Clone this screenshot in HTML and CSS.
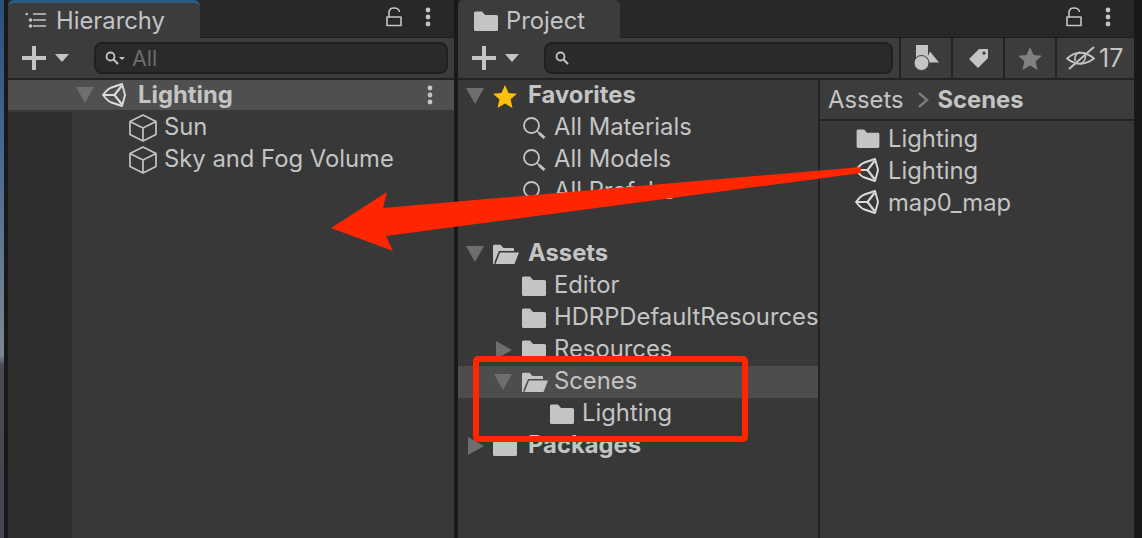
FILE: index.html
```html
<!DOCTYPE html>
<html lang="en">
  <head>
    <meta charset="UTF-8" />
    <meta name="viewport" content="width=device-width, initial-scale=1.0" />
    <title>Hierarchy and Project</title>
    <link rel="stylesheet" href="styles.css">
  </head>
  <body>
    <svg width="0" height="0" class="defs">
      <defs>
        <symbol id="i-unity" viewBox="0 0 24 24">
          <path d="M1 12 Q6 5.500 9.500 4.500 L20 1 Q21.500 6 23 12 Q21.500 18 20 23 L9.500 19.500 Q6 18.500 1 12 Z" fill="none" stroke="currentColor" stroke-width="1.900" stroke-linejoin="round"/>
          <path d="M1 12 H12.500 L19.500 3 M12.500 12 L19.500 21" fill="none" stroke="currentColor" stroke-width="2.100" stroke-linejoin="round"/>
        </symbol>
        <symbol id="i-cube" viewBox="0 0 28 28">
          <path d="M14 1 L27 7.500 V20.500 L14 27 L1 20.500 V7.500 Z M1 7.500 L14 14 L27 7.500 M14 14 V27" fill="none" stroke="currentColor" stroke-width="1.700" stroke-linejoin="round"/>
        </symbol>
        <symbol id="i-folder" viewBox="0 0 24 20">
          <path d="M0 2 Q0 .5 1.500 .5 H8 L11 4 H22.500 Q24 4 24 5.500 V18.500 Q24 20 22.500 20 H1.500 Q0 20 0 18.500 Z" fill="currentColor"/>
        </symbol>
        <symbol id="i-open" viewBox="0 0 26 20">
          <path d="M0 2 Q0 .7 1.300 .7 H7.500 L10.500 4 H20 Q21 4 21 5 V7 H6 L1.500 18 V20 H0 Z" fill="currentColor"/>
          <path d="M7 8.500 H26 L21.500 20 H2.500 Z" fill="currentColor"/>
        </symbol>
        <symbol id="i-glass" viewBox="0 0 24 24">
          <circle cx="9.500" cy="9.500" r="7.500" fill="none" stroke="currentColor" stroke-width="1.800"/>
          <path d="M15 15 L17 17" stroke="currentColor" stroke-width="1.500"/>
          <path d="M17 17 L22.500 22" stroke="currentColor" stroke-width="3"/>
        </symbol>
        <symbol id="i-glass-small" viewBox="0 0 14 14">
          <circle cx="5.500" cy="5.500" r="4" fill="none" stroke="currentColor" stroke-width="1.800"/>
          <path d="M8.500 8.500 L13 13" stroke="currentColor" stroke-width="2"/>
        </symbol>
        <symbol id="i-lock" viewBox="0 0 16 20">
          <path d="M1 10 H15 V18.500 H1 Z M3 10 V5.500 Q3 1 8 1 Q13 1 13.500 5" fill="none" stroke="currentColor" stroke-width="1.600" stroke-linejoin="round"/>
        </symbol>
        <symbol id="i-dots" viewBox="0 0 6 20">
          <circle cx="3" cy="3" r="2.400" fill="currentColor"/>
          <circle cx="3" cy="10" r="2.400" fill="currentColor"/>
          <circle cx="3" cy="17" r="2.400" fill="currentColor"/>
        </symbol>
        <symbol id="i-plus" viewBox="0 0 24 24">
          <path d="M12 0 V24 M0 12 H24" stroke="currentColor" stroke-width="4"/>
        </symbol>
      </defs>
    </svg>

    <div class="scene-strip"></div>

    <section class="panel hierarchy">
      <div class="tabbar">
        <div class="tab tab-active">
          <svg class="tab-icon" width="22" height="16" viewBox="0 0 22 16">
            <path d="M8 1 H21 M8 7 H21 M8 13 H21" stroke="currentColor" stroke-width="1.600" fill="none"/>
            <circle cx="1.700" cy="1" r="1.300" fill="currentColor"/>
            <circle cx="5.500" cy="7" r="1.800" fill="currentColor"/>
            <circle cx="5.500" cy="13" r="1.800" fill="currentColor"/>
          </svg>
          <span>Hierarchy</span>
        </div>
        <div class="tab-tools">
          <svg class="lock" width="16" height="20"><use href="#i-lock"/></svg>
          <svg class="dots" width="6" height="20"><use href="#i-dots"/></svg>
        </div>
      </div>
      <div class="toolbar">
        <div class="add">
          <svg width="24" height="24"><use href="#i-plus"/></svg>
          <span class="caret-down"></span>
        </div>
        <div class="search">
          <svg class="search-glass" width="14" height="14"><use href="#i-glass-small"/></svg>
          <span class="search-mini"></span>
          <span class="search-hint">All</span>
        </div>
      </div>
      <div class="hier-body">
        <div class="hier-gutter"></div>
        <div class="hier-list">
          <div class="row row-scene">
            <span class="tri-down"></span>
            <svg class="unity" width="24" height="24"><use href="#i-unity"/></svg>
            <b>Lighting</b>
            <svg class="dots row-dots" width="6" height="20"><use href="#i-dots"/></svg>
          </div>
          <div class="row row-child">
            <svg class="cube" width="28" height="28"><use href="#i-cube"/></svg>
            <span>Sun</span>
          </div>
          <div class="row row-child">
            <svg class="cube" width="28" height="28"><use href="#i-cube"/></svg>
            <span>Sky and Fog Volume</span>
          </div>
        </div>
      </div>
    </section>

    <section class="panel project">
      <div class="tabbar">
        <div class="tab tab-project">
          <svg class="tab-folder" width="24" height="20"><use href="#i-folder"/></svg>
          <span>Project</span>
        </div>
        <div class="tab-tools">
          <svg class="lock" width="16" height="20"><use href="#i-lock"/></svg>
          <svg class="dots" width="6" height="20"><use href="#i-dots"/></svg>
        </div>
      </div>
      <div class="toolbar toolbar-project">
        <div class="add">
          <svg width="24" height="24"><use href="#i-plus"/></svg>
          <span class="caret-down"></span>
        </div>
        <div class="search search-project">
          <svg class="search-glass" width="14" height="14"><use href="#i-glass-small"/></svg>
        </div>
        <div class="filter">
          <svg width="25" height="26" viewBox="0 0 25 26">
            <rect x="2" y="0" width="12" height="12.500" fill="currentColor"/>
            <path d="M16 6.500 L25 17.500 H11 Z" fill="currentColor"/>
            <circle cx="7.500" cy="18" r="7.500" fill="currentColor" stroke="#3c3c3c" stroke-width="1"/>
          </svg>
        </div>
        <div class="filter">
          <svg width="21" height="21" viewBox="0 0 21 21">
            <path fill-rule="evenodd" d="M11 1 H20 V10 L10 20 L1 11 Z M16 3.500 a1.600 1.600 0 1 0 .01 0 Z" fill="currentColor"/>
          </svg>
        </div>
        <div class="filter">
          <svg class="filter-star" width="24" height="23" viewBox="0 0 24 23">
            <path d="M12 0 L15.500 8 L24 8.800 L17.600 14.300 L19.500 23 L12 18.400 L4.500 23 L6.400 14.300 L0 8.800 L8.500 8 Z" fill="currentColor"/>
          </svg>
        </div>
        <div class="filter filter-hidden">
          <svg width="29" height="24" viewBox="0 0 29 24">
            <path d="M1 12.500 Q14 1 28 12.500 Q14 23 1 12.500 Z" fill="none" stroke="currentColor" stroke-width="1.800"/>
            <path d="M14 6 Q8 8 9 15 M19 8 Q21 15 14 18" fill="none" stroke="currentColor" stroke-width="1.600"/>
            <path d="M3 23 L28 1" stroke="currentColor" stroke-width="2"/>
          </svg>
          <span>17</span>
        </div>
      </div>
      <div class="project-body">
        <div class="tree">
          <div class="row tree-top">
            <span class="tri-down"></span>
            <svg class="gold" width="24" height="23" viewBox="0 0 24 23">
              <path d="M12 0 L15.500 8 L24 8.800 L17.600 14.300 L19.500 23 L12 18.400 L4.500 23 L6.400 14.300 L0 8.800 L8.500 8 Z" fill="currentColor"/>
            </svg>
            <b>Favorites</b>
          </div>
          <div class="row tree-l1"><svg width="24" height="24"><use href="#i-glass"/></svg><span>All Materials</span></div>
          <div class="row tree-l1"><svg width="24" height="24"><use href="#i-glass"/></svg><span>All Models</span></div>
          <div class="row tree-l1"><svg width="24" height="24"><use href="#i-glass"/></svg><span>All Prefabs</span></div>
          <div class="row tree-gap"></div>
          <div class="row tree-top">
            <span class="tri-down"></span>
            <svg class="open" width="26" height="20"><use href="#i-open"/></svg>
            <b>Assets</b>
          </div>
          <div class="row tree-l1"><svg width="24" height="20"><use href="#i-folder"/></svg><span>Editor</span></div>
          <div class="row tree-l1"><svg width="24" height="20"><use href="#i-folder"/></svg><span>HDRPDefaultResources</span></div>
          <div class="row tree-l1 tree-arrowed">
            <span class="tri-right"></span>
            <svg width="24" height="20"><use href="#i-folder"/></svg><span>Resources</span>
          </div>
          <div class="row tree-l1 tree-arrowed row-selected">
            <span class="tri-down"></span>
            <svg class="open" width="26" height="20"><use href="#i-open"/></svg><span>Scenes</span>
          </div>
          <div class="row tree-l2"><svg width="24" height="20"><use href="#i-folder"/></svg><span>Lighting</span></div>
          <div class="row tree-top">
            <span class="tri-right"></span>
            <svg width="24" height="20"><use href="#i-folder"/></svg>
            <b>Packages</b>
          </div>
        </div>
        <div class="browser">
          <div class="crumbs">
            <span>Assets</span>
            <svg width="12" height="16" viewBox="0 0 12 16"><path d="M2 1 L10 8 L2 15" fill="none" stroke="currentColor" stroke-width="2.500"/></svg>
            <b>Scenes</b>
          </div>
          <div class="files">
            <div class="row file"><svg width="24" height="19"><use href="#i-folder"/></svg><span>Lighting</span></div>
            <div class="row file"><svg class="unity" width="24" height="24"><use href="#i-unity"/></svg><span>Lighting</span></div>
            <div class="row file"><svg class="unity" width="24" height="24"><use href="#i-unity"/></svg><span>map0_map</span></div>
          </div>
        </div>
      </div>
    </section>

    <!-- Anotacoes em vermelho por cima do print -->
    <svg class="marks" width="1142" height="538" viewBox="0 0 1142 538">
      <path d="M861 167 L861 173 L386 236 L393 251 L331 228 L387 192 L383 208 Z" fill="#ff2600"/>
      <rect x="476" y="359" width="269" height="80" rx="2" fill="none" stroke="#ff2600" stroke-width="6"/>
    </svg>
  </body>
</html>
```

FILE: styles.css
```css
* {
  box-sizing: border-box;
}

html,
body {
  height: 100%;
}

body {
  margin: 0;
  display: flex;
  overflow: hidden;
  background: #191919;
  color: #c4c4c4;
  font-family: Inter, "Noto Sans", sans-serif;
  font-size: 23.8px;
  padding-right: 8px;
  gap: 4px;
}

svg {
  flex: none;
}

.defs {
  position: absolute;
}

.scene-strip {
  width: 4px;
  flex: none;
  background: linear-gradient(#2a4f78 0, #4a6a90 30%, #7d8791 66%, #4a4a52 68%, #45454f 100%);
}

.panel {
  display: flex;
  flex-direction: column;
  background: #383838;
  min-width: 0;
}

.hierarchy {
  width: 446px;
  flex: none;
}

.project {
  flex: 1;
}

/* Abas */
.tabbar {
  display: flex;
  justify-content: space-between;
  height: 38px;
  flex: none;
  background: #282828;
  border-bottom: 1px solid #1d1d1d;
}

.tab {
  display: flex;
  align-items: center;
  height: 38px;
  gap: 10px;
  background: #3c3c3c;
  border-radius: 6px 6px 0 0;
  color: #c4c4c4;
}

.tab-active {
  width: 192px;
  padding-left: 17px;
  gap: 9px;
  border-top: 3px solid #2c5d87;
}

.tab-project {
  width: 162px;
  padding: 3px 0 0 16px;
  gap: 8px;
}

.tab-tools {
  display: flex;
  align-items: center;
  gap: 23px;
  padding: 0 23px 3px 0;
}

/* Barra de ferramentas */
.toolbar {
  display: flex;
  align-items: center;
  height: 42px;
  flex: none;
  background: #3c3c3c;
  border-bottom: 2px solid #232323;
}

.add {
  display: flex;
  align-items: center;
  gap: 9px;
  width: 86px;
  padding-left: 14px;
  flex: none;
  color: #c4c4c4;
}

.caret-down {
  width: 0;
  height: 0;
  border-left: 7px solid transparent;
  border-right: 7px solid transparent;
  border-top: 8px solid #c4c4c4;
}

.search {
  display: flex;
  align-items: center;
  flex: 1;
  height: 32px;
  margin-right: 6px;
  padding-left: 9px;
  background: #2a2a2a;
  border: 2px solid #202020;
  border-radius: 8px;
  color: #c4c4c4;
}

.search-mini {
  width: 0;
  height: 0;
  border-left: 3px solid transparent;
  border-right: 3px solid transparent;
  border-top: 3px solid #c4c4c4;
}

.search-hint {
  margin-left: 7px;
  color: #6d6d6d;
  font-size: 21.5px;
}

.filter {
  display: flex;
  align-items: center;
  justify-content: center;
  width: 52px;
  height: 40px;
  flex: none;
  border-left: 2px solid #232323;
  color: #c4c4c4;
}

.filter-star {
  color: #808080;
}

.filter-hidden {
  width: 79px;
  justify-content: flex-start;
  gap: 4px;
  font-size: 25px;
  padding-left: 9px;
}

/* Hierarquia */
.hier-body {
  display: flex;
  flex: 1;
}

.hier-gutter {
  width: 64px;
  margin-top: 32px;
  background: #2e2e2e;
  flex: none;
}

.hier-list {
  flex: 1;
}

.row {
  display: flex;
  align-items: center;
  height: 32px;
  white-space: nowrap;
}

/* o texto fica um pouco acima do centro da linha */
.row span,
.row b {
  margin-bottom: 4px;
}

.row-scene {
  height: 30px;
  margin-left: -64px;
  margin-bottom: 2px;
  padding-left: 68px;
  background: #4f4f4f;
  gap: 8px;
}

.row-scene b {
  margin: 0 0 2px 4px;
}

.row-dots {
  margin-left: auto;
  margin-right: 21px;
}

.row-child {
  padding-left: 57px;
  gap: 7px;
}

.row .tri-down,
.row .tri-right {
  display: inline-block;
  width: 0;
  height: 0;
  flex: none;
  margin-bottom: 0;
}

.tri-down {
  border-left: 9px solid transparent;
  border-right: 9px solid transparent;
  border-top: 16px solid #6e6e6e;
}

.tri-right {
  border-top: 9px solid transparent;
  border-bottom: 9px solid transparent;
  border-left: 16px solid #6e6e6e;
}

/* Projeto */
.project-body {
  display: flex;
  flex: 1;
  min-height: 0;
}

.tree {
  width: 362px;
  flex: none;
  overflow: hidden;
  border-right: 2px solid #232323;
}

.tree b,
.row-scene b {
  font-weight: 700;
}

.tree-top {
  padding-left: 8px;
  gap: 9px;
}

.tree-top b {
  margin-left: 2px;
}

.row.tree-top .tri-right {
  margin-left: 2px;
}

.open {
  margin-right: -2px;
}

.tree-l1 {
  padding-left: 64px;
  gap: 8px;
}

.tree-gap {
  height: 30px;
}

.tree-arrowed {
  padding-left: 36px;
  gap: 10px;
}

.tree-arrowed svg {
  margin-right: -2px;
}

.tree-arrowed .open {
  margin-right: -4px;
}

.row.tree-arrowed .tri-right {
  margin-left: 2px;
}

.tree-l2 {
  padding-left: 92px;
  gap: 8px;
}

.row-selected {
  background: #4d4d4d;
}

.browser {
  flex: 1;
  min-width: 0;
}

.crumbs {
  display: flex;
  align-items: center;
  height: 41px;
  gap: 13px;
  padding-left: 8px;
  background: #3c3c3c;
  border-bottom: 2px solid #232323;
}

.crumbs svg {
  color: #7a7a7a;
  margin-right: -4px;
}

.files {
  padding-top: 1px;
}

.file {
  padding-left: 36px;
  gap: 8px;
}

.row.file span {
  margin-bottom: 0;
}

.file .unity {
  margin: 0 1px 0 -1px;
  color: #dcdcdc;
}

.row-scene .unity {
  color: #dcdcdc;
}

.gold {
  color: #ffc107;
}

/* Anotacoes */
.marks {
  position: absolute;
  left: 0;
  top: 0;
}
```
